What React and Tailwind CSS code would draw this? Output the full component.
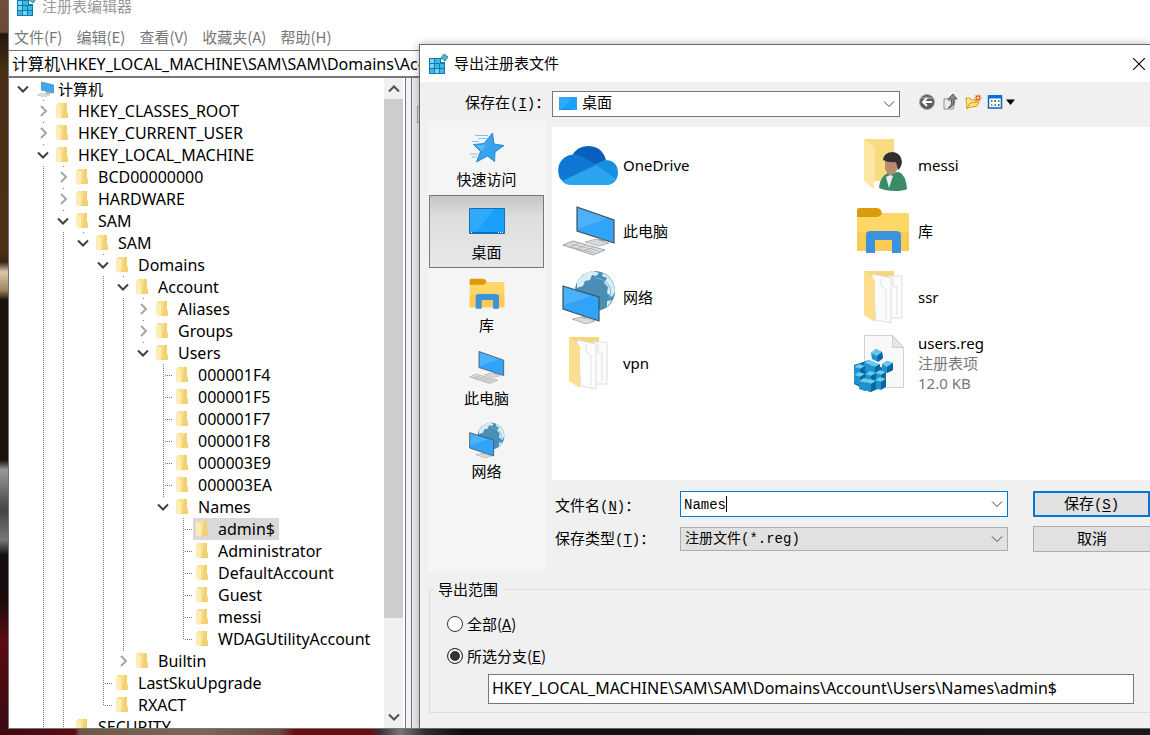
import React from "react";

const ROWS = [
  { depth: 0, label: "计算机", state: "open", last: true, computer: true },
  { depth: 1, label: "HKEY_CLASSES_ROOT", state: "closed" },
  { depth: 1, label: "HKEY_CURRENT_USER", state: "closed" },
  { depth: 1, label: "HKEY_LOCAL_MACHINE", state: "open" },
  { depth: 2, label: "BCD00000000", state: "closed" },
  { depth: 2, label: "HARDWARE", state: "closed" },
  { depth: 2, label: "SAM", state: "open" },
  { depth: 3, label: "SAM", state: "open", last: true },
  { depth: 4, label: "Domains", state: "open" },
  { depth: 5, label: "Account", state: "open" },
  { depth: 6, label: "Aliases", state: "closed" },
  { depth: 6, label: "Groups", state: "closed" },
  { depth: 6, label: "Users", state: "open", last: true },
  { depth: 7, label: "000001F4" },
  { depth: 7, label: "000001F5" },
  { depth: 7, label: "000001F7" },
  { depth: 7, label: "000001F8" },
  { depth: 7, label: "000003E9" },
  { depth: 7, label: "000003EA" },
  { depth: 7, label: "Names", state: "open", last: true },
  { depth: 8, label: "admin$", selected: true },
  { depth: 8, label: "Administrator" },
  { depth: 8, label: "DefaultAccount" },
  { depth: 8, label: "Guest" },
  { depth: 8, label: "messi" },
  { depth: 8, label: "WDAGUtilityAccount", last: true },
  { depth: 5, label: "Builtin", state: "closed", last: true },
  { depth: 4, label: "LastSkuUpgrade" },
  { depth: 4, label: "RXACT", last: true },
  { depth: 2, label: "SECURITY", state: "line" },
];

function withGuides(rows) {
  const open = [];
  return rows.map((row) => {
    const guides = open.slice(0, row.depth);
    open.length = row.depth;
    open[row.depth] = !row.last;
    return { ...row, guides };
  });
}

function Chevron({ dir = "down", className = "" }) {
  const d = { down: "M1 3.5 6 8.5 11 3.5", right: "M4 1 9 6 4 11", up: "M1 8.5 6 3.5 11 8.5" }[dir];
  return (
    <svg viewBox="0 0 12 12" className={className} fill="none" stroke="currentColor" aria-hidden="true">
      <path d={d} />
    </svg>
  );
}

function SmallFolder() {
  return (
    <svg viewBox="0 0 12 16" className="h-4 w-3" aria-hidden="true">
      <path d="M2 0h9v15H3z" fill="#f8df8c" />
      <path d="M8 0h3v9l1 1v5H6z" fill="#f3d173" />
      <path d="M0 0.500 5 3v11l-1 2-4-2z" fill="#fdecb4" />
    </svg>
  );
}

function SmallComputer() {
  return (
    <svg viewBox="0 0 19 16" className="h-4 w-[19px]" aria-hidden="true">
      <path d="M5.500 1 17.500 4v8L5.500 9z" fill="#3ba9f3" stroke="#4d86ab" strokeWidth=".8" />
      <path d="M10 11h4l1 2h-6z" fill="#b4b9bd" />
      <path d="m1 14 5-2 8 2-6 2z" fill="#dcdfe1" stroke="#b5b9bc" strokeWidth=".5" />
    </svg>
  );
}

function RegeditIcon({ className }) {
  return (
    <svg viewBox="0 0 20 20" className={className} aria-hidden="true">
      <path d="M1 4h12v4h4v12H1z" fill="#0f7cab" />
      <path d="M2 5h4v4H2zM2 10h4v4H2zM7 15h4v4H7z" fill="#7ad4f5" />
      <path d="M7 5h5v4H7zM7 10h4v4H7zM2 15h4v4H2zM12 10h4v4h-4zM12 15h4v4h-4z" fill="#3fb7e6" />
      <path d="m16 0 4 3-3 4-4-3z" fill="#5fb0d4" stroke="#2787b0" />
    </svg>
  );
}

function DesktopIcon({ className }) {
  return (
    <svg viewBox="0 0 36 26" className={className} preserveAspectRatio="none" aria-hidden="true">
      <path d="M.5.5h35v25H.5z" fill="#18a0fb" stroke="#1a6fae" />
      <path d="M1 1h24L8 23H1z" fill="#3db0ff" opacity=".6" />
      <path d="M1 24h34v1H1z" fill="#0a6fc0" />
      <path d="M2 24.500h1M29 24.500h1M31 24.500h1M33 24.500h1" stroke="#fff" />
    </svg>
  );
}

function StarIcon() {
  return (
    <svg viewBox="0 0 36 32" className="h-8 w-9" aria-hidden="true">
      <path d="m23.500 1 1.500 11 10 1.500-9 6.500-.500 9.500-7-5.500-11 6 4-10.500-7-7 10.500-1z" fill="#35a4ef" stroke="#1479c4" strokeWidth=".8" />
      <path d="m22.500 3-6.500 10-9 .500 6 5.500z" fill="#71c4fb" opacity=".7" />
      <path d="M6 3.500h13M9 6.500h9M3 9.500h7M1 22h8M3 25h5" stroke="#6fb3de" strokeWidth=".8" />
    </svg>
  );
}

function LibraryIcon({ className }) {
  return (
    <svg viewBox="0 0 54 46" className={className} aria-hidden="true">
      <path d="M1 5h51l1 1v36l-1 1H2l-1-1z" fill="#ffd766" />
      <path d="M1 24h52v18l-1 1H2l-1-1z" fill="#fbcc55" />
      <path d="M1 1.500 2.500 0H21q3 0 4 2.500L26 5l-2 3-3 1H1z" fill="#d99a0b" />
      <path d="M10 45V27q0-4 4-4h26q5 0 5 4v18h-9V32H19v13z" fill="#3c92dd" />
    </svg>
  );
}

function PcIcon({ className }) {
  return (
    <svg viewBox="0 0 54 52" className={className} aria-hidden="true">
      <path d="m15 2 37 13v23L15 26z" fill="#2fa4f8" stroke="#45525c" strokeWidth="1.200" />
      <path d="m16 3.500 29 10L16 24z" fill="#62bbfa" opacity=".55" />
      <path d="m37 33 5 2v2l-5-1z" fill="#8e9499" />
      <path d="m23 37 11-3 13 4-10 3z" fill="#d8dadc" stroke="#9a9ea1" strokeWidth=".7" />
      <path d="m1 40 10-4 32 9-12 5z" fill="#dcdee0" stroke="#8d9194" strokeWidth=".8" />
      <path d="m5 41 28 7M9 39l28 7M8 42l9-4M15 44l9-4M22 46l9-3.500" stroke="#a6aaad" strokeWidth=".7" />
    </svg>
  );
}

function NetworkIcon({ className }) {
  return (
    <svg viewBox="0 0 54 54" className={className} aria-hidden="true">
      <circle cx="33" cy="21" r="20" fill="#4a8db5" />
      <path d="M15 12q6-10 16-11l6 2-3 3-4-1-2 5-5 1-2 5-6 2zM41 3q11 5 12 18l-3 6-5-4 1-6-4-4 3-5-5-2zM45 31l5-1-5 7z" fill="#d6edf5" />
      <path d="M33 8a17 14 0 0 1 14 20" stroke="#77b4d3" fill="none" />
      <path d="m1 16 36 11v24L1 39z" fill="#2fa4f8" stroke="#45525c" strokeWidth="1.200" />
      <path d="m2 17.500 27 8.500L2 35z" fill="#62bbfa" opacity=".55" />
      <path d="m20 46 4 1v3l-4-1z" fill="#8e9499" />
      <path d="m10 49 10-2 13 4-9 3z" fill="#d8dadc" stroke="#9a9ea1" strokeWidth=".7" />
    </svg>
  );
}

function OneDriveIcon() {
  return (
    <svg viewBox="0 0 60 40" className="h-10 w-[60px]" aria-hidden="true">
      <path d="M14 11Q19 1 30 1q14 0 18 14L34 25z" fill="#0a5fbd" />
      <path d="M1 31Q-2 19 6 13q7-6 17-2l16 9L8 38q-6-3-7-7z" fill="#0f78d4" />
      <path d="M36 20 47 15q12 0 13 12 0 12-12 13H30z" fill="#1590df" />
      <path d="M4 36 38 20l20 14q-3 6-10 6H13q-6 0-9-4z" fill="#2aa4ee" />
    </svg>
  );
}

function UserFolderIcon() {
  return (
    <svg viewBox="0 0 46 54" className="ml-[10px] h-[54px] w-[46px]" aria-hidden="true">
      <path d="M1 1h30v42H12z" fill="#f9db80" />
      <path d="m1 1 11 9v42L1 43z" fill="#fde7a4" />
      <path d="M11 44h7v8h-7z" fill="#fff" />
      <path d="M16 50q1-12 9-15l11-1q7 3 8 17-4 2-12 2-9 0-16-3z" fill="#3b8a68" />
      <path d="m23 39 4-2 3 1-4 12z" fill="#e8eeec" />
      <path d="M22 19q1-4 8-4 7 1 7 7l-3 10q-4 7-9 4l-3-5z" fill="#b98a6e" />
      <path d="M20 22q1-8 10-8 8 1 9 10-1 6-4 8l-2-8q-7 1-13-2z" fill="#312f31" />
    </svg>
  );
}

function DocsFolderIcon() {
  return (
    <svg viewBox="0 0 46 54" className="ml-[10px] h-[54px] w-[46px]" aria-hidden="true">
      <path d="M1 1h30v15H12z" fill="#f6d77d" />
      <path d="M25 6h14v42H27z" fill="#fcfcfc" stroke="#dedede" />
      <path d="M9 4 28 8v45l-15-3z" fill="#fcfcfc" stroke="#dfdfdf" />
      <path d="M18 9v6l5 5v30M30 8v8l4 1v28" stroke="#e0e0e0" fill="none" />
      <path d="m1 1 11 9v42L1 45z" fill="#fbdf8f" />
    </svg>
  );
}

function Cube({ x, y }) {
  return (
    <g transform={`translate(${x} ${y})`}>
      <path d="m0 3 5-3 6 2-5 3z" fill="#6ccbf1" />
      <path d="m0 3 6 2v8l-6-2z" fill="#1b93d0" />
      <path d="m6 5 5-3v8l-5 3z" fill="#0a689f" />
    </g>
  );
}

function RegFileIcon() {
  return (
    <svg viewBox="0 0 52 58" className="h-[58px] w-[52px]" aria-hidden="true">
      <path d="M11.500 1.500h28l11 12v40h-39z" fill="#f8f8f8" stroke="#d2d2d2" />
      <path d="M39.500 1.500v12h11z" fill="#e6e6e6" stroke="#cfcfcf" />
      <path d="m1 31 15-5 17 10v16l-16 6-16-8z" fill="#0d6ea6" />
      <Cube x={11} y={26} /><Cube x={16} y={28} />
      <Cube x={1} y={30} /><Cube x={1} y={38} />
      <Cube x={22} y={36} /><Cube x={12} y={37} />
      <Cube x={6} y={44} /><Cube x={22} y={43} /><Cube x={12} y={45} />
      <g fill="#1b93d0">
        <path d="m18 19 5-4 6 3 1 6-5 4-6-3z" />
        <path d="m29 30 5-3 6 2v7l-6 3-5-3z" />
      </g>
      <path d="m18 19 5-4 6 3-5 4zM29 30l5-3 6 2-6 4z" fill="#66c6ee" />
      <path d="m24 22 5-4 1 6-5 4zM34 33l6-4v7l-6 3z" fill="#0a689f" />
    </svg>
  );
}

const PLACES = [
  { label: "快速访问", icon: <StarIcon /> },
  { label: "桌面", icon: <DesktopIcon className="h-[26px] w-9" />, selected: true },
  { label: "库", icon: <LibraryIcon className="h-[32px] w-9" /> },
  { label: "此电脑", icon: <PcIcon className="h-[35px] w-9" /> },
  { label: "网络", icon: <NetworkIcon className="h-[36px] w-9" /> },
];

const FILES = [
  { label: "OneDrive", icon: <OneDriveIcon /> },
  { label: "messi", icon: <UserFolderIcon /> },
  { label: "此电脑", icon: <PcIcon className="ml-1 h-[52px] w-[54px]" /> },
  { label: "库", icon: <LibraryIcon className="ml-[3px] h-[46px] w-[54px]" /> },
  { label: "网络", icon: <NetworkIcon className="ml-1 h-[54px] w-[54px]" /> },
  { label: "ssr", icon: <DocsFolderIcon /> },
  { label: "vpn", icon: <DocsFolderIcon /> },
  { label: "users.reg", icon: <RegFileIcon />, details: ["注册表项", "12.0 KB"] },
];

const V_DOTS = "w-px bg-[repeating-linear-gradient(180deg,#777_0px,#777_1px,transparent_1px,transparent_2px)]";
const H_DOTS = "h-px bg-[repeating-linear-gradient(90deg,#777_0px,#777_1px,transparent_1px,transparent_2px)]";

function TreeRow({ row }) {
  const expandable = row.state === "open" || row.state === "closed";
  return (
    <li className="flex h-[22px] shrink-0 items-center whitespace-nowrap" role="treeitem" aria-selected={!!row.selected}>
      {row.guides.map((on, i) => (
        <span key={i} className="flex h-full w-5 shrink-0 pl-[10px]">
          {on && i > 0 && <span className={V_DOTS} />}
        </span>
      ))}
      {expandable && (
        <span className="flex h-full w-5 shrink-0 flex-col items-center">
          <span className={row.depth > 0 ? "h-px w-px bg-[#777]" : "h-px w-px"} />
          <Chevron
            dir={row.state === "open" ? "down" : "right"}
            className={row.state === "open" ? "mt-1 h-3 w-3 stroke-2 text-[#404040]" : "mt-1 h-3 w-3 stroke-2 text-[#a6a6a6]"}
          />
        </span>
      )}
      {row.state === "line" && (
        <span className="flex h-full w-5 shrink-0 pl-[10px]"><span className={V_DOTS} /></span>
      )}
      {!row.state && (
        <span className="flex h-full w-5 shrink-0 pl-[10px]">
          <span className={row.last ? `${V_DOTS} h-[12px]` : `${V_DOTS} h-full`} />
          <span className={`${H_DOTS} ml-px mt-[11px] flex-1`} />
        </span>
      )}
      <span className={row.selected ? "flex h-full items-center bg-[#d9d9d9] pr-1" : "flex h-full items-center"}>
        <span className="flex w-[25px] shrink-0 items-center pl-[3px]">
          {row.computer ? <SmallComputer /> : <SmallFolder />}
        </span>
        <span className={row.computer ? "text-[15px]" : "text-base"}>{row.label}</span>
      </span>
    </li>
  );
}

function RegistryWindow() {
  return (
    <main className="ml-2 flex min-h-0 flex-1 flex-col overflow-hidden border-b border-l border-[#777] bg-white">
      <header className="flex h-6 shrink-0 items-start pl-[7px] text-[#999]">
        <RegeditIcon className="-mt-1 h-5 w-5" />
        <h1 className="-mt-1 ml-[6px] leading-5">注册表编辑器</h1>
      </header>
      <nav className="flex h-[26px] shrink-0 items-center gap-[14px] pl-[5px] text-[#777]">
        {["文件(F)", "编辑(E)", "查看(V)", "收藏夹(A)", "帮助(H)"].map((m) => (
          <button key={m} type="button" className="whitespace-nowrap font-[Noto_Sans_CJK_SC,sans-serif]">{m}</button>
        ))}
      </nav>
      <input
        aria-label="地址"
        className="h-[26px] w-full shrink-0 border-t border-[#777] bg-white pb-[2px] pl-[3px] text-base outline-none"
        defaultValue="计算机\HKEY_LOCAL_MACHINE\SAM\SAM\Domains\Account\Users\Names\admin$"
      />
      <div className="flex min-h-0 flex-1 border-t-2 border-[#777]">
        <ul role="tree" className="flex w-[375px] shrink-0 flex-col overflow-hidden pl-1">
          {withGuides(ROWS).map((row, i) => <TreeRow key={i} row={row} />)}
        </ul>
        <div className="flex w-[19px] shrink-0 flex-col items-center bg-[#f0f0f0] text-[#505050]">
          <button type="button" aria-label="向上滚动" className="flex h-[21px] w-full items-center justify-center">
            <Chevron dir="up" className="h-3 w-3 stroke-2" />
          </button>
          <div className="h-[519px] w-full shrink-0 bg-[#cdcdcd]" />
          <button type="button" aria-label="向下滚动" className="mt-auto flex h-[22px] w-full items-center justify-center">
            <Chevron className="h-3 w-3 stroke-2" />
          </button>
        </div>
        <div className="ml-[2px] w-[7px] shrink-0 border-x border-[#777] bg-[#f0f2f5]" />
        <div className="flex-1 bg-[#e9ebee] pl-[5px] pt-7">
          <div className="h-[17px] border border-[#aaa] bg-[#e4e6e8]" />
        </div>
      </div>
    </main>
  );
}

function Toolbar() {
  return (
    <div className="flex items-center gap-[5px] pb-1 pl-[18px]">
      <button type="button" aria-label="后退">
        <svg viewBox="0 0 18 18" className="h-[18px] w-[18px]">
          <circle cx="9" cy="9" r="7.500" fill="#5c5c5c" stroke="#aaa" />
          <path d="M3 6a7 5 0 0 1 12 0z" fill="#999" />
          <path d="M14 9H5M9 5 5 9l4 4" stroke="#fff" strokeWidth="2" fill="none" />
        </svg>
      </button>
      <button type="button" aria-label="向上一级">
        <svg viewBox="0 0 18 18" className="h-[18px] w-[18px]">
          <path d="M3 6h4l1 2h6l-2 8H3z" fill="#ececec" stroke="#8b8b8b" />
          <path d="M7 15q5-3 3-9H7l5-5 4 5h-3q1 8-6 9z" fill="#888" stroke="#444" strokeWidth=".8" />
        </svg>
      </button>
      <button type="button" aria-label="新建文件夹">
        <svg viewBox="0 0 18 18" className="h-[18px] w-[18px]">
          <path d="M2 5h4l1 2h5v3l-8 5-1 1z" fill="#ffe791" stroke="#d89b1c" />
          <path d="m3 15 3-5 9-1-2 4z" fill="#ffe27a" stroke="#d89b1c" />
          <path d="M14 1.500v7M10.500 5h7M11.500 2.500l5 5M16.500 2.500l-5 5" stroke="#ef5a24" strokeWidth="1.200" />
          <circle cx="14" cy="5" r="1.200" fill="#ffe060" />
        </svg>
      </button>
      <button type="button" aria-label="查看菜单" className="flex items-center">
        <svg viewBox="0 0 28 18" className="h-[18px] w-7">
          <path d="M1.500 3h13v12h-13z" fill="#fff" stroke="#0b62c4" strokeWidth="1.500" />
          <path d="M1 2h14v3.500H1z" fill="#0b72d9" />
          <path d="M4 7h1.500v2H4zM7.500 11H9v2H7.500z" fill="#2b8cc4" />
          <path d="M7.500 7H9v2H7.500zM11 11h1.500v2H11z" fill="#555" />
          <path d="M11 7h1.500v2H11z" fill="#3a9c45" />
          <path d="M4 11h1.500v2H4z" fill="#e2683a" />
          <path d="M19 6.500h9L23.500 12z" fill="#000" />
        </svg>
      </button>
    </div>
  );
}

function Key({ children }) {
  return <span className="font-[Liberation_Mono,monospace] text-[14px]">(<u className="underline-offset-2">{children}</u>)</span>;
}

function ExportDialog() {
  return (
    <section
      role="dialog"
      aria-labelledby="dialog-title"
      className="absolute bottom-[6px] left-[419px] right-0 top-11 flex flex-col overflow-hidden border-y border-l border-[#666] bg-[#f0f0f0] shadow-[0_0_8px_rgba(0,0,0,0.3)]"
    >
      <header className="flex h-[37px] shrink-0 items-center bg-white pl-2">
        <RegeditIcon className="h-5 w-5" />
        <h2 id="dialog-title" className="ml-[6px]">导出注册表文件</h2>
        <button type="button" aria-label="关闭" className="ml-auto mr-[5px]">
          <svg viewBox="0 0 12 12" className="h-3 w-3" stroke="#000" strokeWidth="1.100"><path d="m0 0 12 12M12 0 0 12" /></svg>
        </button>
      </header>

      <div className="flex h-[39px] shrink-0 items-center pt-1">
        <label htmlFor="folder" className="w-[132px] shrink-0 whitespace-nowrap pb-[2px] pl-[45px]">保存在<Key>I</Key>：</label>
        <div className="flex h-[26px] w-[348px] shrink-0 items-center border border-[#777] bg-white pl-[6px] pr-1">
          <DesktopIcon className="h-[13px] w-[18px] shrink-0" />
          <select id="folder" className="min-w-0 flex-1 appearance-none bg-transparent pb-[2px] pl-[5px] outline-none">
            <option>桌面</option>
          </select>
          <Chevron className="h-3 w-3 text-[#444]" />
        </div>
        <Toolbar />
      </div>

      <div className="flex shrink-0 pl-2">
        <nav className="mr-[6px] flex h-[450px] w-[118px] shrink-0 flex-col bg-[#f5f5f5] pl-px pr-[2px] pt-px">
          {PLACES.map((p) => (
            <button
              key={p.label}
              type="button"
              className={
                p.selected
                  ? "flex h-[73px] flex-col items-center justify-end border border-[#777] bg-linear-to-b from-[#c6c6c6] via-[#dedede] via-30% to-[#e8e8e8] pb-1"
                  : "flex h-[73px] flex-col items-center justify-end pb-[5px]"
              }
            >
              <span className="flex h-9 items-center">{p.icon}</span>
              <span className="mt-[2px] leading-[22px]">{p.label}</span>
            </button>
          ))}
        </nav>
        <div className="flex min-w-0 flex-1 flex-col pt-[6px]">
          <ul className="grid h-[353px] shrink-0 grid-cols-[295px_1fr] content-start bg-white pl-[6px] pt-[5px]">
            {FILES.map((f) => (
              <li key={f.label} className="flex h-[66px] items-center">
                <span className="w-[60px] shrink-0">{f.icon}</span>
                <span className="ml-[5px] leading-5">
                  {f.label}
                  {f.details?.map((d) => <span key={d} className="block text-[#777]">{d}</span>)}
                </span>
              </li>
            ))}
          </ul>
          <form className="grid grid-cols-[125px_1fr_117px] items-center gap-y-2 pl-[3px] pt-[10px]" onSubmit={(e) => e.preventDefault()}>
            <label htmlFor="filename" className="pt-1">文件名<Key>N</Key>：</label>
            <div className="relative mr-[25px] flex h-[26px] items-center border border-[#0078d7] bg-white pr-1">
              <input
                id="filename"
                defaultValue="Names"
                className="h-full min-w-0 flex-1 bg-transparent pl-[3px] pt-[2px] font-[Liberation_Mono,monospace] text-[14px] outline-none"
              />
              <span className="absolute left-[45px] top-1 h-4 w-px bg-black" />
              <button type="button" aria-label="显示文件名列表"><Chevron className="h-3 w-3 text-[#444]" /></button>
            </div>
            <button type="submit" className="h-[26px] border-2 border-[#0078d7] bg-[#e1e1e1] leading-5">保存<Key>S</Key></button>
            <label htmlFor="filetype">保存类型<Key>T</Key>：</label>
            <div className="mr-[25px] flex h-6 items-center border border-[#adadad] bg-[#e1e1e1] pr-1">
              <select id="filetype" className="min-w-0 flex-1 appearance-none bg-transparent pl-1 font-[Liberation_Mono,Noto_Sans_CJK_SC,monospace] text-[14px] outline-none">
                <option>注册文件(*.reg)</option>
              </select>
              <Chevron className="h-3 w-3 text-[#444]" />
            </div>
            <button type="button" className="h-[26px] border border-r-0 border-[#adadad] bg-[#e1e1e1] pb-[2px] leading-5">取消</button>
          </form>
        </div>
      </div>

      <fieldset className="ml-[9px] mt-[7px] h-[135px] shrink-0 border border-r-0 border-[#dcdcdc] pl-[17px] pr-4">
        <legend className="-ml-[13px] px-1 leading-[22px]">导出范围</legend>
        <label className="mt-[13px] flex h-[22px] items-center gap-1 font-[Noto_Sans_CJK_SC,sans-serif]">
          <input type="radio" name="range" className="h-4 w-4 appearance-none rounded-full border border-[#333] bg-white" />
          <span>全部(<u>A</u>)</span>
        </label>
        <label className="mt-[10px] flex h-[22px] items-center gap-1 font-[Noto_Sans_CJK_SC,sans-serif]">
          <input type="radio" name="range" defaultChecked className="h-4 w-4 appearance-none rounded-full border border-[#333] bg-white checked:bg-[#333] checked:shadow-[inset_0_0_0_2px_#fff]" />
          <span>所选分支(<u>E</u>)</span>
        </label>
        <input
          aria-label="所选分支路径"
          defaultValue="HKEY_LOCAL_MACHINE\SAM\SAM\Domains\Account\Users\Names\admin$"
          className="ml-[41px] mt-[7px] block h-[30px] w-[calc(100%-41px)] border border-[#777] bg-white pb-[3px] pl-[3px] text-base outline-none"
        />
      </fieldset>
    </section>
  );
}

export default function App() {
  return (
    <div className="relative flex h-screen flex-col overflow-hidden bg-[linear-gradient(180deg,#70503a_0px,#6a4a32_32px,#24170e_34px,#4a2f16_70px,#4d3115_250px,#3a2512_262px,#d8c8ac_272px,#a08560_290px,#1a120c_300px,#1a120c_460px,#999_470px,#444_510px,#777_540px,#141010_555px,#1a0c0c_600px,#5a0c14_640px,#3a0a10_100%)] font-[Noto_Sans,Noto_Sans_CJK_SC,sans-serif] text-[15px] text-black">
      <RegistryWindow />
      <div className="h-[6px] shrink-0 bg-[linear-gradient(90deg,#3a0a10_0px,#5a0c14_75px,#6b5845_80px,#7a6854_200px,#6a4a3a_280px,#6a0c10_295px,#6a0c10_370px,#3a3030_380px,#777_400px,#333_425px,#111_460px,#1a1a1a_100%)]" />
      <ExportDialog />
    </div>
  );
}
